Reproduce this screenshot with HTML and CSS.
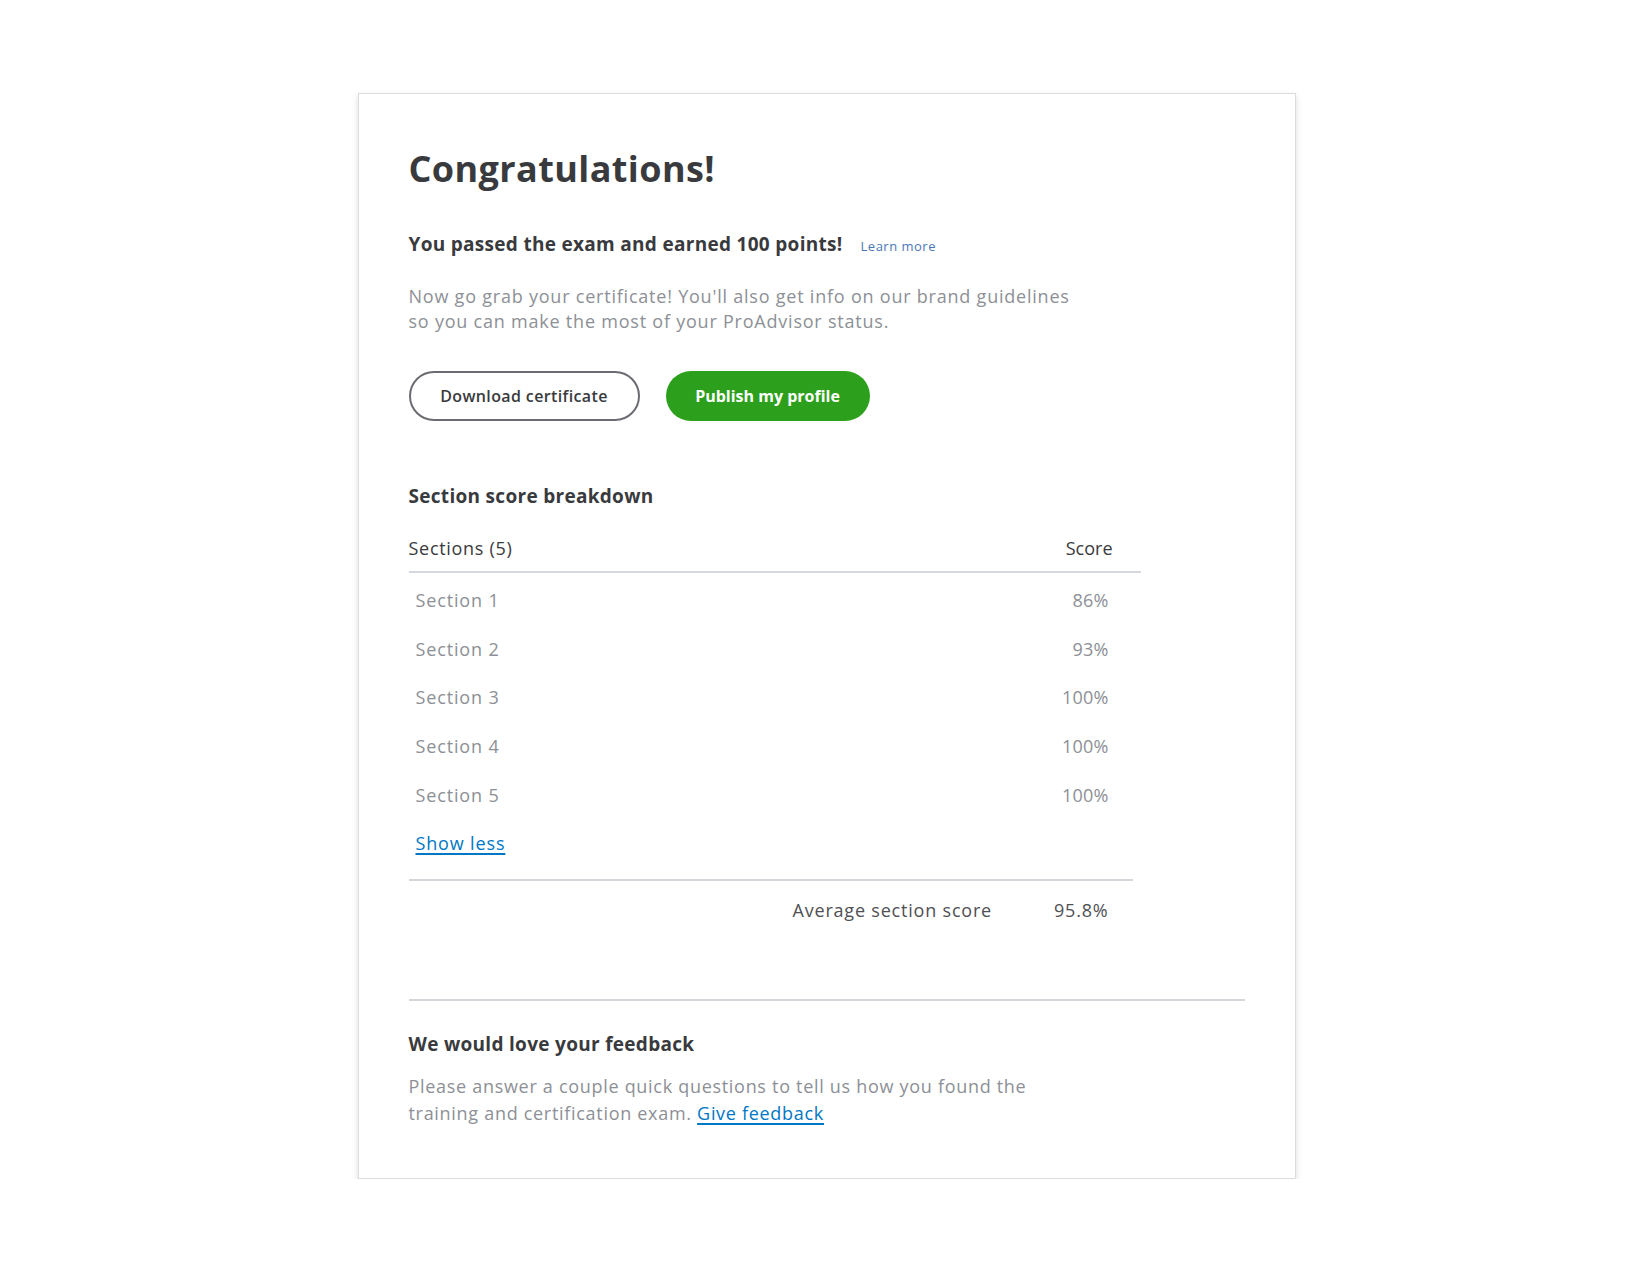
FILE: index.html
```html
<!DOCTYPE html>
<html lang="en">
<head>
<meta charset="utf-8">
<title>Congratulations</title>
<link rel="stylesheet" href="styles.css">
</head>
<body>
<div class="card">
  <h1 class="title">Congratulations!</h1>
  <p class="lead"><strong>You passed the exam and earned 100 points!</strong><a class="learn" href="#">Learn more</a></p>
  <p class="desc">Now go grab your certificate! You'll also get info on our brand guidelines<br>so you can make the most of your ProAdvisor status.</p>
  <div class="actions">
    <button class="btn btn-outline">Download certificate</button>
    <button class="btn btn-primary">Publish my profile</button>
  </div>
  <h2 class="section-title">Section score breakdown</h2>
  <div class="table">
    <div class="thead"><span>Sections (5)</span><span>Score</span></div>
    <div class="tbody">
      <div class="row"><span>Section 1</span><span>86%</span></div>
      <div class="row"><span>Section 2</span><span>93%</span></div>
      <div class="row"><span>Section 3</span><span>100%</span></div>
      <div class="row"><span>Section 4</span><span>100%</span></div>
      <div class="row"><span>Section 5</span><span>100%</span></div>
      <div class="row"><a class="link" href="#">Show less</a></div>
    </div>
    <div class="avg"><span>Average section score</span><span>95.8%</span></div>
  </div>
  <hr class="divider">
  <h2 class="section-title feedback-title">We would love your feedback</h2>
  <p class="desc feedback-desc">Please answer a couple quick questions to tell us how you found the<br>training and certification exam. <a class="link" href="#">Give feedback</a></p>
</div>
</body>
</html>
```
FILE: styles.css
```css
* { box-sizing: border-box; }
html, body { background: #ffffff; }
body {
  margin: 0;
  padding-top: 93px;
  padding-left: 3px;
  font-family: "Open Sans", "Noto Sans", "Liberation Sans", sans-serif;
  color: #393a3d;
}
.card {
  width: 938px;
  height: 1086px;
  margin: 0 auto;
  background: #fff;
  border: 1px solid #dcdcdc;
  box-shadow: 0 3px 6px rgba(0,0,0,0.14);
  padding: 51px 50px 0 50px;
}
.title {
  margin: 0;
  font-size: 36px;
  line-height: 48px;
  font-weight: 700;
  letter-spacing: 0.4px;
  color: #393a3d;
}
.lead {
  margin: 39px 0 0;
  font-size: 19px;
  line-height: 24px;
  display: flex;
  align-items: baseline;
  gap: 18px;
}
.lead strong { font-weight: 700; letter-spacing: 0.3px; }
.learn {
  font-size: 13px;
  letter-spacing: 0.5px;
  color: #4a78b5;
  text-decoration: none;
}
.desc {
  margin: 26px 0 0;
  font-size: 18px;
  line-height: 25px;
  color: #8d9096;
  font-weight: 400;
  letter-spacing: 0.78px;
}
.actions {
  margin-top: 37px;
  display: flex;
  gap: 26px;
}
.btn {
  height: 50px;
  border-radius: 25px;
  font-family: inherit;
  font-size: 16px;
  font-weight: 600;
  padding: 0;
  cursor: pointer;
}
.btn-outline {
  width: 231px;
  background: #fff;
  border: 2px solid #6b6c72;
  color: #393a3d;
  letter-spacing: 0.37px;
}
.btn-primary {
  width: 204px;
  background: #2ca01c;
  border: none;
  color: #fff;
  font-weight: 700;
}
.section-title {
  margin: 63px 0 0;
  font-size: 19px;
  line-height: 24px;
  font-weight: 700;
  letter-spacing: 0.3px;
}
.table {
  width: 732px;
  margin-top: 28px;
}
.thead {
  display: flex;
  justify-content: space-between;
  font-size: 18px;
  line-height: 24px;
  font-weight: 500;
  padding: 0 28px 11px 0;
  border-bottom: 2px solid #d4d7dc;
  color: #393a3d;
  letter-spacing: 0.7px;
}
.thead span:last-child { letter-spacing: 0; }
.tbody {
  padding-top: 3px;
  width: 724px;
  border-bottom: 2px solid #d4d7dc;
  padding-bottom: 11px;
}
.row {
  display: flex;
  justify-content: space-between;
  align-items: center;
  height: 48.6px;
  padding: 0 24px 0 7px;
  font-size: 18px;
  color: #8d9096;
  letter-spacing: 0.85px;
}
.row span:last-child { letter-spacing: 0.2px; }
.link {
  color: #0077c5;
  text-decoration: underline;
  text-decoration-thickness: 2px;
  text-underline-offset: 3px;
}
.avg {
  width: 724px;
  display: flex;
  justify-content: flex-end;
  gap: 62px;
  padding: 17px 24px 0 0;
  font-size: 18px;
  line-height: 24px;
  color: #4f5055;
  letter-spacing: 0.8px;
}
.avg span:last-child { letter-spacing: 0.8px; }
.divider {
  margin: 77px 0 0;
  border: none;
  border-top: 2px solid #d4d7dc;
  width: 836px;
}
.feedback-title {
  margin-top: 31px;
}
.feedback-desc {
  margin-top: 17px;
  line-height: 27px;
  letter-spacing: 0.7px;
}
```
